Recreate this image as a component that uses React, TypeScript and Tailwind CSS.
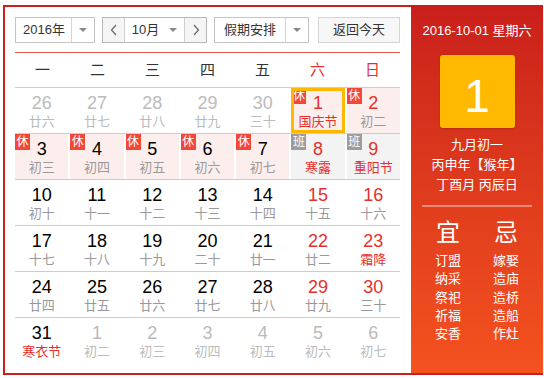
import React from 'react';

type Day = {
  n: number;
  lunar: string;
  other?: boolean;
  weekend?: boolean;
  fest?: boolean;
  tag?: '休' | '班';
  selected?: boolean;
};

const rows: Day[][] = [
  [
    { n: 26, lunar: '廿六', other: true },
    { n: 27, lunar: '廿七', other: true },
    { n: 28, lunar: '廿八', other: true },
    { n: 29, lunar: '廿九', other: true },
    { n: 30, lunar: '三十', other: true },
    { n: 1, lunar: '国庆节', weekend: true, fest: true, tag: '休', selected: true },
    { n: 2, lunar: '初二', weekend: true, tag: '休' },
  ],
  [
    { n: 3, lunar: '初三', tag: '休' },
    { n: 4, lunar: '初四', tag: '休' },
    { n: 5, lunar: '初五', tag: '休' },
    { n: 6, lunar: '初六', tag: '休' },
    { n: 7, lunar: '初七', tag: '休' },
    { n: 8, lunar: '寒露', weekend: true, fest: true, tag: '班' },
    { n: 9, lunar: '重阳节', weekend: true, fest: true, tag: '班' },
  ],
  [
    { n: 10, lunar: '初十' },
    { n: 11, lunar: '十一' },
    { n: 12, lunar: '十二' },
    { n: 13, lunar: '十三' },
    { n: 14, lunar: '十四' },
    { n: 15, lunar: '十五', weekend: true },
    { n: 16, lunar: '十六', weekend: true },
  ],
  [
    { n: 17, lunar: '十七' },
    { n: 18, lunar: '十八' },
    { n: 19, lunar: '十九' },
    { n: 20, lunar: '二十' },
    { n: 21, lunar: '廿一' },
    { n: 22, lunar: '廿二', weekend: true },
    { n: 23, lunar: '霜降', weekend: true, fest: true },
  ],
  [
    { n: 24, lunar: '廿四' },
    { n: 25, lunar: '廿五' },
    { n: 26, lunar: '廿六' },
    { n: 27, lunar: '廿七' },
    { n: 28, lunar: '廿八' },
    { n: 29, lunar: '廿九', weekend: true },
    { n: 30, lunar: '三十', weekend: true },
  ],
  [
    { n: 31, lunar: '寒衣节', fest: true },
    { n: 1, lunar: '初二', other: true },
    { n: 2, lunar: '初三', other: true },
    { n: 3, lunar: '初四', other: true },
    { n: 4, lunar: '初五', other: true },
    { n: 5, lunar: '初六', other: true },
    { n: 6, lunar: '初七', other: true },
  ],
];

const weekdays = ['一', '二', '三', '四', '五', '六', '日'];
const yi = ['订盟', '纳采', '祭祀', '祈福', '安香'];
const ji = ['嫁娶', '造庙', '造桥', '造船', '作灶'];

const Caret = () => (
  <span className="block w-0 h-0 border-l-[4px] border-r-[4px] border-t-[4px] border-l-transparent border-r-transparent border-t-[#888]" />
);

const Chevron = ({ dir }: { dir: 'l' | 'r' }) => (
  <svg width="8" height="12" viewBox="0 0 8 12" fill="none" stroke="#666" strokeWidth="1.2">
    {dir === 'l' ? <path d="M6 1 L1.5 6 L6 11" /> : <path d="M2 1 L6.5 6 L2 11" />}
  </svg>
);

const DayCell = ({ d }: { d: Day }) => {
  const bg = d.tag === '休' ? 'bg-[#fdeeee]' : d.tag === '班' ? 'bg-[#f3f3f3]' : '';
  const numColor = d.other ? 'text-[#bbbbbb]' : d.weekend ? 'text-[#e6302c]' : 'text-black';
  const lunarColor = d.other ? 'text-[#bbbbbb]' : d.fest ? 'text-[#e6302c]' : 'text-[#999999]';
  return (
    <div className={`relative h-[45px] flex flex-col items-center pt-[5px] ${bg}`}>
      {d.tag && (
        <span
          className={`absolute left-0 top-0 w-[15px] h-[16px] flex items-center justify-center text-[12px] leading-none text-white ${
            d.tag === '休' ? 'bg-[#f4473a]' : 'bg-[#9c9c9c]'
          }`}
        >
          {d.tag}
        </span>
      )}
      {d.selected && <span className="absolute inset-0 border-[3px] border-[#ffb800]" />}
      <span className={`text-[18px] leading-[20px] h-[20px] ${numColor}`}>{d.n}</span>
      <span className={`mt-[1px] text-[13px] leading-[16px] ${lunarColor}`}>{d.lunar}</span>
    </div>
  );
};

export default function App() {
  return (
    <div
      className="w-[544px] h-[378px] bg-white pt-[5px] pl-[3px]"
      style={{ fontFamily: '"Liberation Sans", "Noto Sans CJK SC", sans-serif' }}
    >
      <div className="w-[540px] h-[370px] border-2 border-r-0 border-[#cc1f1c] flex">
        {/* calendar body */}
        <div className="w-[406px] pl-[10px] pt-[10px]">
          <div className="flex h-[26px] text-[13px] text-[#333]">
            <div className="w-[80px] flex border border-[#c4c4c4] bg-white">
              <div className="w-[55px] flex items-center justify-center pl-[1px]">2016年</div>
              <div className="flex-1 border-l border-[#d4d4d4] flex items-center justify-center">
                <Caret />
              </div>
            </div>
            <div className="ml-[7px] w-[105px] flex border border-[#b8b8b8]">
              <div className="w-[22px] bg-[#f5f5f5] flex items-center justify-center border-r border-[#cfcfcf]">
                <Chevron dir="l" />
              </div>
              <div className="flex-1 flex items-center justify-center gap-[10px] bg-white">
                <span>10月</span>
                <Caret />
              </div>
              <div className="w-[22px] bg-[#f5f5f5] flex items-center justify-center border-l border-[#cfcfcf]">
                <Chevron dir="r" />
              </div>
            </div>
            <div className="ml-[7px] w-[95px] flex border border-[#c4c4c4] bg-white">
              <div className="w-[70px] flex items-center justify-center">假期安排</div>
              <div className="flex-1 border-l border-[#d4d4d4] flex items-center justify-center">
                <Caret />
              </div>
            </div>
            <div className="ml-[9px] w-[82px] flex items-center justify-center border border-[#d4d4d4] bg-[#f7f7f7]">
              返回今天
            </div>
          </div>

          <div className="w-[385px] mt-[9px] border-t border-[#e8584d]" />

          <div className="w-[385px] h-[35px] grid grid-cols-7 border-b border-[#cccccc] text-[15px]">
            {weekdays.map((w, i) => (
              <div
                key={w}
                className={`flex items-center justify-center pt-[1px] ${i >= 5 ? 'text-[#e6302c]' : 'text-[#333]'}`}
              >
                {w}
              </div>
            ))}
          </div>

          {rows.map((row, ri) => (
            <div
              key={ri}
              className={`w-[385px] grid grid-cols-7 gap-x-[2px] ${ri < rows.length - 1 ? 'border-b border-[#cccccc]' : ''}`}
            >
              {row.map((d, ci) => (
                <DayCell key={ci} d={d} />
              ))}
            </div>
          ))}
        </div>

        {/* side panel */}
        <div className="w-[132px] -mt-[2px] -mb-[0px] bg-gradient-to-b from-[#c91f1b] to-[#f4521f] text-white flex flex-col items-center">
          <div className="pt-[18px] text-[13px] leading-[16px]">2016-10-01 星期六</div>
          <div className="mt-[16px] w-[75px] h-[73px] rounded-[3px] bg-[#ffb900] shadow-[0_1px_2px_rgba(120,30,0,0.35)] flex items-center justify-center pt-[8px] text-[46px] leading-none">
            1
          </div>
          <div className="mt-[7px] text-[13px] leading-[20px] text-center">
            <div>九月初一</div>
            <div>丙申年【猴年】</div>
            <div>丁酉月 丙辰日</div>
          </div>
          <div className="mt-[10px] w-[110px] h-[2px] bg-white/40" />
          <div className="mt-[12px] flex">
            <div className="w-[58px] flex flex-col items-center">
              <div className="text-[24px] leading-[28px]">宜</div>
              <div className="mt-[5px] text-[13px] leading-[18.3px] text-center">
                {yi.map((t) => (
                  <div key={t}>{t}</div>
                ))}
              </div>
            </div>
            <div className="w-[58px] flex flex-col items-center">
              <div className="text-[24px] leading-[28px]">忌</div>
              <div className="mt-[5px] text-[13px] leading-[18.3px] text-center">
                {ji.map((t) => (
                  <div key={t}>{t}</div>
                ))}
              </div>
            </div>
          </div>
        </div>
      </div>
    </div>
  );
}
